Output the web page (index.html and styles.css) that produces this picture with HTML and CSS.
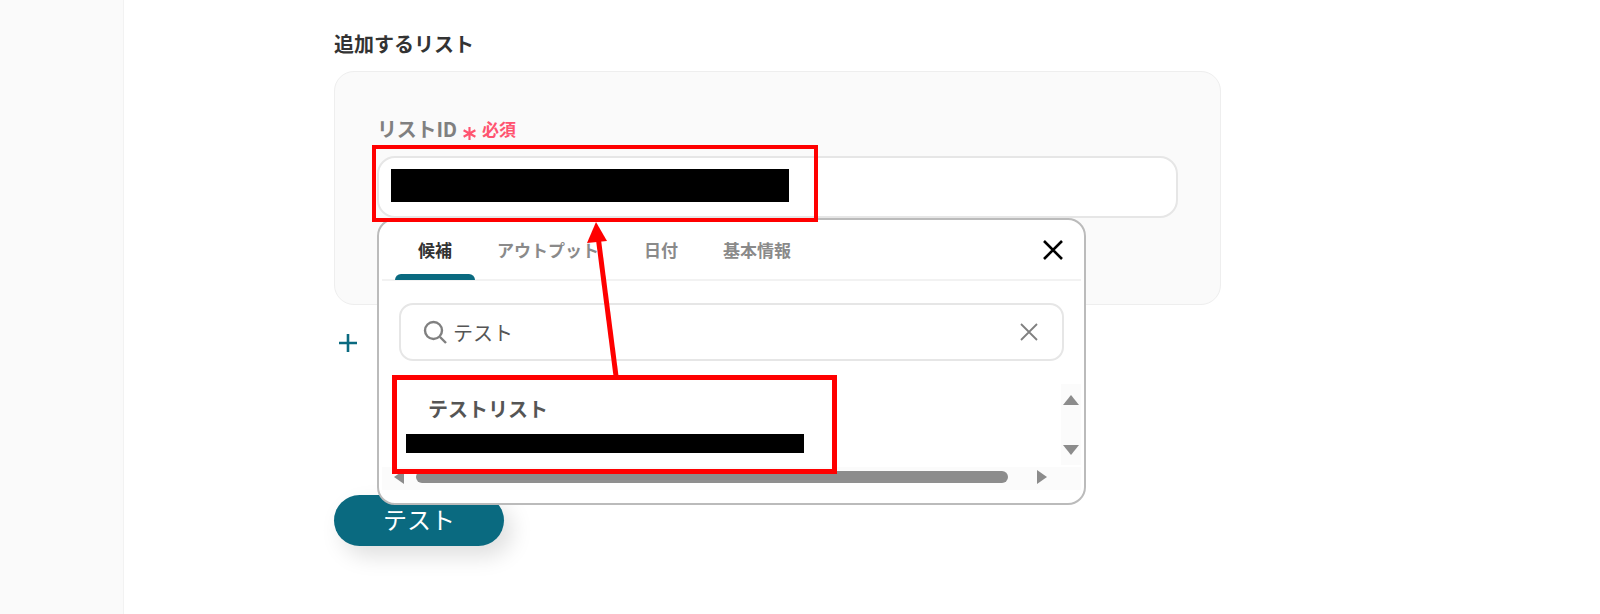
FILE: index.html
```html
<!DOCTYPE html>
<html lang="ja">
<head>
  <meta charset="UTF-8" />
  <meta name="viewport" content="width=device-width, initial-scale=1.0" />
  <title>追加するリスト</title>
  <link rel="stylesheet" href="styles.css">
</head>
<body>
  <div class="page">
    <aside class="sidebar"></aside>

    <main class="main">
      <h2 class="section-title">追加するリスト</h2>

      <div class="card">
        <div class="label-row">
          <span class="label">リストID</span>
          <svg class="asterisk" viewBox="0 0 14 14"><path d="M7 1v12M1.5 4l11 6M12.5 4l-11 6" /></svg>
          <span class="required">必須</span>
        </div>

        <div class="field">
          <div class="input"><span class="masked masked-input"></span></div>

          <div class="popup">
            <div class="tabs">
              <span class="tab active">候補</span>
              <span class="tab tab-output">アウトプット</span>
              <span class="tab tab-date">日付</span>
              <span class="tab tab-info">基本情報</span>
              <svg class="close-icon" viewBox="0 0 20 20"><path d="M1 1l18 18M19 1L1 19" /></svg>
            </div>

            <div class="search">
              <svg class="search-icon" viewBox="0 0 24 24"><circle cx="10.5" cy="10.5" r="8.5" /><path d="M17 17l6 6" /></svg>
              <span class="search-text">テスト</span>
              <svg class="clear-icon" viewBox="0 0 18 18"><path d="M1 1l16 16M17 1L1 17" /></svg>
            </div>

            <div class="results">
              <div class="result-list">
                <div class="result-name">テストリスト</div>
                <span class="masked masked-result"></span>
              </div>
              <div class="v-scroll">
                <span class="arrow-up"></span>
                <span class="arrow-down"></span>
              </div>
            </div>

            <div class="h-scroll">
              <span class="arrow-left"></span>
              <span class="thumb"></span>
              <span class="arrow-right"></span>
            </div>
          </div>
        </div>
      </div>

      <div class="add-row">
        <svg class="plus-icon" viewBox="0 0 20 20"><path d="M10 1v18M1 10h18" /></svg>
      </div>

      <button class="test-btn">テスト</button>
    </main>

    <!-- annotations on top of the screenshot -->
    <div class="mark mark-input"></div>
    <div class="mark mark-result"></div>
    <svg class="pointer" viewBox="0 0 1600 614">
      <path class="pointer-line" d="M616 376L598 236" />
      <path class="pointer-head" d="M596 222L607 241L587 243Z" />
    </svg>
  </div>
</body>
</html>
```

FILE: styles.css
```css
* {
  box-sizing: border-box;
}

html, body {
  height: 100%;
}

body {
  margin: 0;
  font-family: "Noto Sans CJK JP", "Noto Sans", sans-serif;
  background-color: #fff;
  color: #333;
  overflow: hidden;
}

.page {
  position: relative;
  display: flex;
  height: 614px;
  overflow: hidden;
}

.sidebar {
  width: 124px;
  flex-shrink: 0;
  background-color: #fafafa;
  border-right: 1px solid #f2f2f2;
}

.main {
  flex: 1;
  padding: 29px 0 0 210px;
}

.section-title {
  margin: 0 0 12px;
  font-size: 20px;
  line-height: 30px;
  font-weight: 700;
  color: #333;
}

.card {
  width: 887px;
  height: 234px;
  padding: 42px 42px 0;
  background-color: #fafafa;
  border: 1px solid #eee;
  border-radius: 20px;
}

.label-row {
  display: flex;
  align-items: center;
  height: 28px;
  margin-bottom: 14px;
}

.label {
  font-size: 20px;
  font-weight: 700;
  color: #808080;
  letter-spacing: -0.2px;
}

.asterisk {
  width: 15px;
  height: 15px;
  margin: 10px 5px 0 5px;
  fill: none;
  stroke: #ff5470;
  stroke-width: 2;
}

.required {
  font-size: 17px;
  font-weight: 700;
  color: #ff5470;
}

.field {
  position: relative;
}

.input {
  display: flex;
  align-items: center;
  width: 801px;
  height: 62px;
  padding: 0 0 4px 12px;
  background-color: #fff;
  border: 2px solid #e6e6e6;
  border-radius: 18px;
}

.masked {
  display: block;
  width: 398px;
  background-color: #000;
}

.masked-input {
  height: 33px;
}

.masked-result {
  height: 19px;
  margin-left: 24px;
}

.popup {
  position: absolute;
  left: 0;
  top: 62px;
  width: 709px;
  height: 287px;
  padding: 0 3px;
  background-color: #fff;
  border: 2px solid #bbb;
  border-radius: 18px;
}

.tabs {
  display: flex;
  align-items: center;
  height: 61px;
  padding: 0 0 0 13px;
  border-bottom: 2px solid #f2f2f2;
}

.tab {
  font-size: 17px;
  font-weight: 700;
  color: #8a8a8a;
}

.tab.active {
  position: relative;
  width: 80px;
  text-align: center;
  color: #333;
}

.tab.active::after {
  content: "";
  position: absolute;
  left: 0;
  right: 0;
  bottom: -18px;
  height: 6px;
  background-color: #0a6a80;
  border-radius: 6px 6px 0 0;
}

.tab-output {
  margin-left: 22px;
}

.tab-date {
  margin-left: 45px;
}

.tab-info {
  margin-left: 45px;
}

.close-icon {
  width: 20px;
  height: 20px;
  margin-left: auto;
  margin-right: 18px;
  fill: none;
  stroke: #000;
  stroke-width: 2.6;
}

.search {
  display: flex;
  align-items: center;
  width: 665px;
  height: 58px;
  margin: 22px 0 0 17px;
  padding: 0 24px 0 22px;
  background-color: #fff;
  border: 2px solid #e6e6e6;
  border-radius: 14px;
}

.search-icon {
  width: 24px;
  height: 24px;
  fill: none;
  stroke: #808080;
  stroke-width: 2.4;
}

.search-text {
  margin-left: 6px;
  font-size: 20px;
  color: #555;
}

.clear-icon {
  width: 18px;
  height: 18px;
  margin-left: auto;
  fill: none;
  stroke: #808080;
  stroke-width: 1.8;
}

.results {
  display: flex;
  justify-content: space-between;
  height: 83px;
  margin-top: 23px;
}

.result-list {
  padding: 10px 0 0;
}

.result-name {
  margin-left: 46px;
  margin-bottom: 10px;
  font-size: 20px;
  line-height: 30px;
  font-weight: 700;
  color: #555;
}

.v-scroll {
  display: flex;
  flex-direction: column;
  align-items: center;
  justify-content: space-between;
  width: 20px;
  height: 81px;
  padding: 11px 0 10px;
  background-color: #fbfbfb;
}

.arrow-up,
.arrow-down {
  width: 0;
  height: 0;
  border-left: 8px solid transparent;
  border-right: 8px solid transparent;
}

.arrow-up {
  border-bottom: 10px solid #8c8c8c;
}

.arrow-down {
  border-top: 10px solid #8c8c8c;
}

.h-scroll {
  display: flex;
  align-items: center;
  height: 23px;
  padding: 0 0 4px 12px;
  background-color: #fbfbfb;
}

.arrow-left,
.arrow-right {
  width: 0;
  height: 0;
  border-top: 7px solid transparent;
  border-bottom: 7px solid transparent;
}

.arrow-left {
  border-right: 10px solid #8c8c8c;
}

.arrow-right {
  margin-left: 29px;
  border-left: 10px solid #8c8c8c;
}

.thumb {
  width: 592px;
  height: 12px;
  margin-left: 12px;
  background-color: #8c8c8c;
  border-radius: 6px;
}

.add-row {
  display: flex;
  align-items: center;
  height: 76px;
  padding-left: 4px;
}

.plus-icon {
  width: 20px;
  height: 20px;
  fill: none;
  stroke: #0a6a80;
  stroke-width: 2.6;
}

.test-btn {
  display: block;
  width: 170px;
  height: 51px;
  margin-top: 114px;
  padding: 0 0 5px;
  font-family: inherit;
  font-size: 24px;
  color: #fff;
  background-color: #0a6a80;
  border: none;
  border-radius: 26px;
  box-shadow: 8px 10px 22px rgba(0, 0, 0, 0.13);
}

.mark {
  position: absolute;
  border: 4px solid #f00;
}

.mark-input {
  left: 372px;
  top: 145px;
  width: 446px;
  height: 77px;
}

.mark-result {
  left: 392px;
  top: 375px;
  width: 445px;
  height: 99px;
  border-width: 5px;
}

.pointer {
  position: absolute;
  left: 0;
  top: 0;
  width: 1600px;
  height: 614px;
}

.pointer-line {
  fill: none;
  stroke: #f00;
  stroke-width: 5;
}

.pointer-head {
  fill: #f00;
}
```
